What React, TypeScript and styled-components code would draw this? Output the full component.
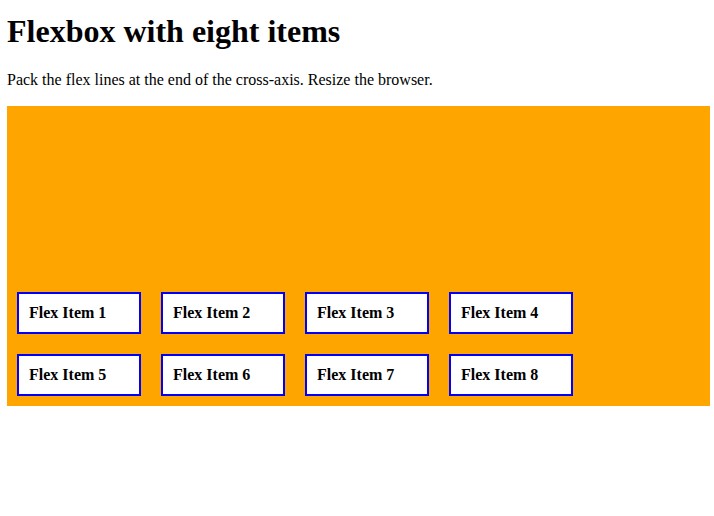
import React from 'react';
import styled, { createGlobalStyle } from 'styled-components';

const items = [1, 2, 3, 4, 5, 6, 7, 8];

export default function App(): React.FunctionComponentElement<JSX.Element> {
  return (
    <>
      <GlobalStyle />
      <Page>
        <Title>{'Flexbox with eight items'}</Title>
        <Intro>{'Pack the flex lines at the end of the cross-axis. Resize the browser.'}</Intro>
        <FlexBox>
          {items.map(n => (
            <FlexItem key={n}>{`Flex Item ${n}`}</FlexItem>
          ))}
        </FlexBox>
      </Page>
    </>
  )
}

// STYLES
const GlobalStyle = createGlobalStyle`
  html, body {
    margin: 0;
    padding: 0;
    background: #fff;
  }

  body {
    font-family: "Liberation Serif", "Times New Roman", serif;
    color: #000;
  }
`

const Page = styled.div`
  padding: 13px 4px 0 7px;
`

const Title = styled.h1`
  font-size: 32px;
  line-height: 37px;
  font-weight: 700;
  margin: 0 0 21px;
`

const Intro = styled.p`
  font-size: 16px;
  line-height: 18px;
  margin: 0 0 17px;
`

const FlexBox = styled.div`
  background: orange;
  display: flex;
  flex-wrap: wrap;
  align-content: flex-end;
  width: 703px;
  height: 300px;
`

const FlexItem = styled.div`
  box-sizing: border-box;
  display: flex;
  align-items: center;
  width: 124px;
  height: 42px;
  margin: 10px;
  padding: 0 10px;
  background: #fff;
  border: 2px solid blue;
  font-size: 16px;
  font-weight: 700;
`
